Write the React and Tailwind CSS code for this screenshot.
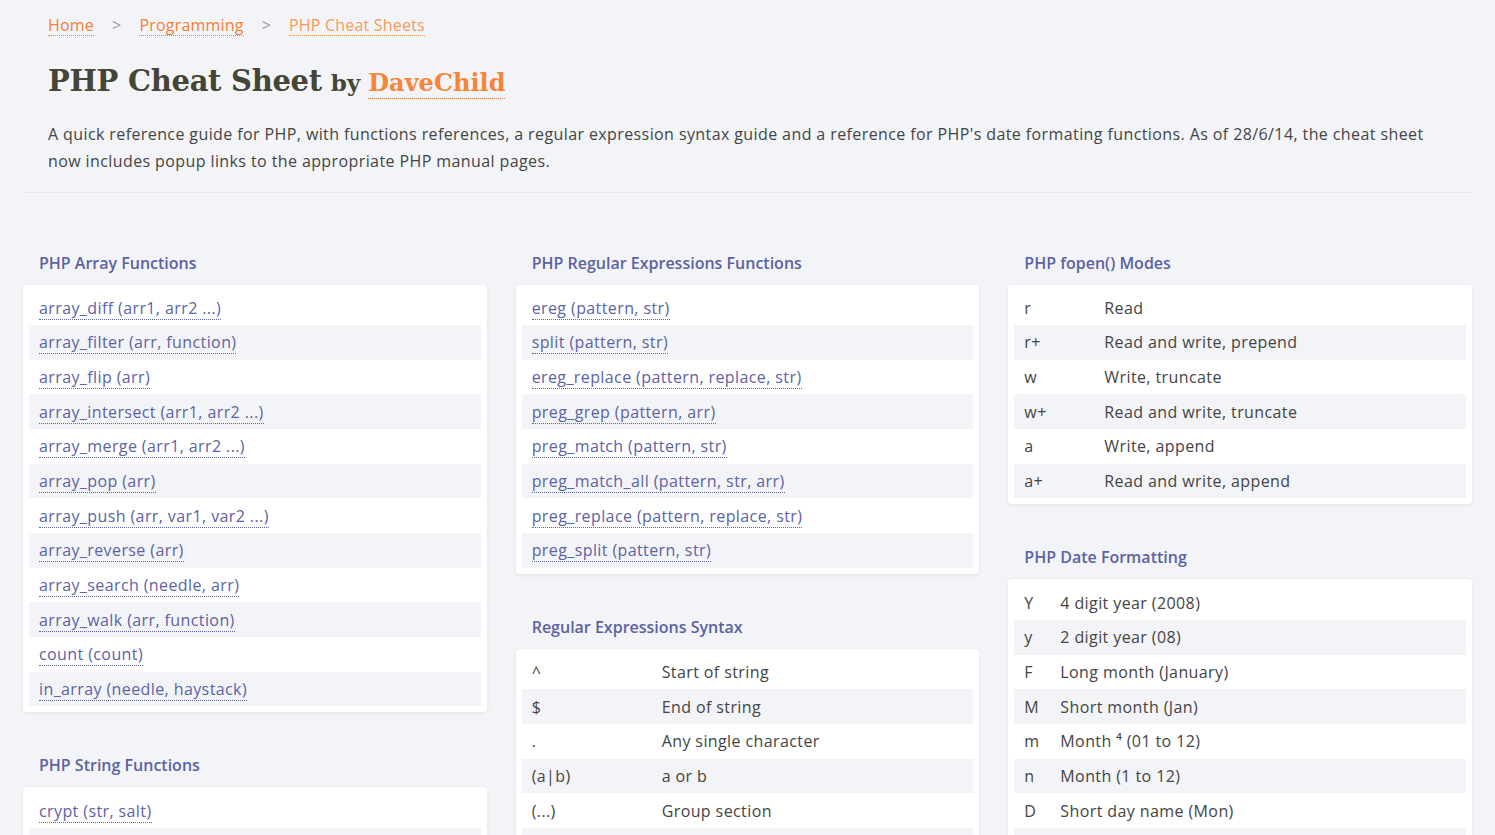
import React from "react";

const arrayFns = [
  "array_diff (arr1, arr2 ...)",
  "array_filter (arr, function)",
  "array_flip (arr)",
  "array_intersect (arr1, arr2 ...)",
  "array_merge (arr1, arr2 ...)",
  "array_pop (arr)",
  "array_push (arr, var1, var2 ...)",
  "array_reverse (arr)",
  "array_search (needle, arr)",
  "array_walk (arr, function)",
  "count (count)",
  "in_array (needle, haystack)",
];
const stringFns = [
  "crypt (str, salt)",
  "explode (sep, str)",
  "implode (glue, arr)",
  "nl2br (str)",
];
const regexFns = [
  "ereg (pattern, str)",
  "split (pattern, str)",
  "ereg_replace (pattern, replace, str)",
  "preg_grep (pattern, arr)",
  "preg_match (pattern, str)",
  "preg_match_all (pattern, str, arr)",
  "preg_replace (pattern, replace, str)",
  "preg_split (pattern, str)",
];
const regexSyntax = [
  ["^", "Start of string"],
  ["$", "End of string"],
  [".", "Any single character"],
  ["(a|b)", "a or b"],
  ["(...)", "Group section"],
  ["[abc]", "In range (a, b or c)"],
];
const fopen = [
  ["r", "Read"],
  ["r+", "Read and write, prepend"],
  ["w", "Write, truncate"],
  ["w+", "Read and write, truncate"],
  ["a", "Write, append"],
  ["a+", "Read and write, append"],
];
const dates = [
  ["Y", "4 digit year (2008)"],
  ["y", "2 digit year (08)"],
  ["F", "Long month (January)"],
  ["M", "Short month (Jan)"],
  ["m", "Month \u2074 (01 to 12)"],
  ["n", "Month (1 to 12)"],
  ["D", "Short day name (Mon)"],
  ["l", "Long day name (Monday)"],
];

function Heading({ children }) {
  return (
    <h2 className="pl-4 h-[22px] mb-[11px] flex items-center text-[16px] tracking-[0px] font-semibold text-[#5b62a3]">
      {children}
    </h2>
  );
}

function Card({ children }) {
  return (
    <div className="bg-white rounded-[4px] p-[6px] shadow-[0_1px_4px_rgba(0,0,0,0.07)]">
      {children}
    </div>
  );
}

function Row({ i, children }) {
  return (
    <div
      className={
        "h-[34.66px] flex items-center pl-[10px] " +
        (i % 2 === 1 ? "bg-[#f3f4f8]" : "bg-white")
      }
    >
      {children}
    </div>
  );
}

function LinkList({ items }) {
  return (
    <Card>
      {items.map((t, i) => (
        <Row key={t} i={i}>
          <span className="text-[#5c63a5] border-b border-dotted border-[#5c63a5] leading-[21px] translate-y-[1px]">
            {t}
          </span>
        </Row>
      ))}
    </Card>
  );
}

function KVTable({ items, keyW }) {
  return (
    <Card>
      {items.map(([k, v], i) => (
        <Row key={k} i={i}>
          <span className={"text-[#444] " + keyW}>{k}</span>
          <span className="text-[#444]">{v}</span>
        </Row>
      ))}
    </Card>
  );
}

function Section({ title, children, first }) {
  return (
    <section className={first ? "" : "mt-[42px]"}>
      <Heading>{title}</Heading>
      {children}
    </section>
  );
}

export default function App() {
  return (
    <div
      className="min-h-screen bg-[#f3f4f8] text-[16px] tracking-[0.4px] text-[#444] overflow-hidden"
      style={{ fontFamily: '"Open Sans", "Noto Sans", sans-serif' }}
    >
      <div className="mx-[23px]">
        <div className="pl-[25px] pt-[13px]">
          <nav className="flex items-center h-[24px] text-[16px] tracking-[0.2px]">
            <span className="text-[#f47f35] border-b border-dotted border-[#f47f35] leading-[20px]">Home</span>
            <span className="text-[#999] mx-[18px]">&gt;</span>
            <span className="text-[#f47f35] border-b border-dotted border-[#f47f35] leading-[20px]">Programming</span>
            <span className="text-[#999] mx-[18px]">&gt;</span>
            <span className="text-[#f79a5a] border-b border-dotted border-[#f79a5a] leading-[20px]">PHP Cheat Sheets</span>
          </nav>
          <h1
            className="mt-[23px] flex items-baseline font-bold text-[#454536] tracking-normal"
            style={{ fontFamily: '"DejaVu Serif", "Liberation Serif", serif' }}
          >
            <span className="text-[29px] tracking-[-0.3px]">PHP Cheat Sheet</span>
            <span className="text-[23px] ml-[9px] mr-[8px]">by</span>
            <span className="text-[24px] text-[#f68538] border-b border-dotted border-[#f68538] leading-[31px]">DaveChild</span>
          </h1>
          <p className="mt-[17px] leading-[27px] text-[16px] text-[#444] pr-[40px]">
            A quick reference guide for PHP, with functions references, a regular expression syntax guide and a reference for PHP's date formating functions. As of 28/6/14, the cheat sheet now includes popup links to the appropriate PHP manual pages.
          </p>
        </div>
        <div className="mt-[17px] border-t border-dotted border-[#dfe3c4]" />
        <div className="grid grid-cols-3 gap-[29px] mt-[59px]">
          <div>
            <Section title="PHP Array Functions" first>
              <LinkList items={arrayFns} />
            </Section>
            <Section title="PHP String Functions">
              <LinkList items={stringFns} />
            </Section>
          </div>
          <div>
            <Section title="PHP Regular Expressions Functions" first>
              <LinkList items={regexFns} />
            </Section>
            <Section title="Regular Expressions Syntax">
              <KVTable items={regexSyntax} keyW="w-[130px]" />
            </Section>
          </div>
          <div>
            <Section title="PHP fopen() Modes" first>
              <KVTable items={fopen} keyW="w-[80px]" />
            </Section>
            <Section title="PHP Date Formatting">
              <KVTable items={dates} keyW="w-[36px]" />
            </Section>
          </div>
        </div>
      </div>
    </div>
  );
}
